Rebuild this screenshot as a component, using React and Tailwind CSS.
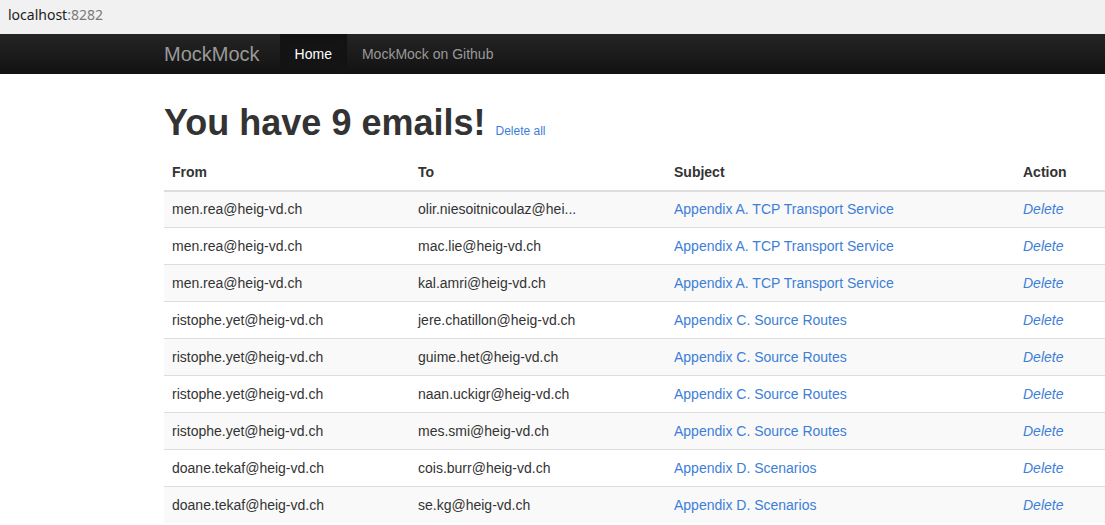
import React from 'react'

const emails = [
  { from: 'men.rea@heig-vd.ch', to: 'olir.niesoitnicoulaz@hei...', subject: 'Appendix A. TCP Transport Service' },
  { from: 'men.rea@heig-vd.ch', to: 'mac.lie@heig-vd.ch', subject: 'Appendix A. TCP Transport Service' },
  { from: 'men.rea@heig-vd.ch', to: 'kal.amri@heig-vd.ch', subject: 'Appendix A. TCP Transport Service' },
  { from: 'ristophe.yet@heig-vd.ch', to: 'jere.chatillon@heig-vd.ch', subject: 'Appendix C. Source Routes' },
  { from: 'ristophe.yet@heig-vd.ch', to: 'guime.het@heig-vd.ch', subject: 'Appendix C. Source Routes' },
  { from: 'ristophe.yet@heig-vd.ch', to: 'naan.uckigr@heig-vd.ch', subject: 'Appendix C. Source Routes' },
  { from: 'ristophe.yet@heig-vd.ch', to: 'mes.smi@heig-vd.ch', subject: 'Appendix C. Source Routes' },
  { from: 'doane.tekaf@heig-vd.ch', to: 'cois.burr@heig-vd.ch', subject: 'Appendix D. Scenarios' },
  { from: 'doane.tekaf@heig-vd.ch', to: 'se.kg@heig-vd.ch', subject: 'Appendix D. Scenarios' },
]

export default function App() {
  return (
    <div className="w-[1105px] h-[525px] overflow-hidden bg-white text-[#333] text-[14px] leading-[20px] font-['Liberation_Sans',Arial,sans-serif]">
      {/* browser address bar */}
      <div className="h-[34px] bg-[#f1f1f1] px-[8px] pt-[5px] font-['Noto_Sans',sans-serif] text-[14px]">
        <span className="text-[#1c1c1c]">localhost</span>
        <span className="text-[#7a7a7a]">:8282</span>
      </div>

      <nav className="h-[40px] bg-gradient-to-b from-[#252525] to-[#121212] flex pl-[164px]">
        <a className="text-[20px] leading-[20px] py-[10px] pr-[20px] text-[#999]">MockMock</a>
        <a className="px-[15px] py-[10px] bg-[#141414] text-white shadow-[inset_0_3px_8px_rgba(0,0,0,0.125)]">Home</a>
        <a className="px-[15px] py-[10px] text-[#999]">MockMock on Github</a>
      </nav>

      <div className="pl-[164px]">
        <div className="flex items-baseline mt-[29px] mb-[11px]">
          <h1 className="text-[36px] leading-[39.6px] font-bold">You have 9 emails!</h1>
          <a className="ml-[10px] text-[12px] text-[#3d7ed8]">Delete all</a>
        </div>

        <table className="w-[1140px] table-fixed border-collapse">
          <colgroup>
            <col className="w-[246px]" />
            <col className="w-[256px]" />
            <col className="w-[349px]" />
            <col />
          </colgroup>
          <thead>
            <tr>
              <th className="text-left p-[8px] font-bold border-b-2 border-[#ddd]">From</th>
              <th className="text-left p-[8px] font-bold border-b-2 border-[#ddd]">To</th>
              <th className="text-left p-[8px] font-bold border-b-2 border-[#ddd]">Subject</th>
              <th className="text-left p-[8px] font-bold border-b-2 border-[#ddd]">Action</th>
            </tr>
          </thead>
          <tbody>
            {emails.map((m, i) => (
              <tr key={i} className={i % 2 === 0 ? 'bg-[#f9f9f9]' : ''}>
                <td className={`px-[8px] border-[#ddd] ${i === 0 ? 'pt-[7px] pb-[8px]' : 'py-[8px] border-t'}`}>{m.from}</td>
                <td className={`px-[8px] border-[#ddd] ${i === 0 ? 'pt-[7px] pb-[8px]' : 'py-[8px] border-t'}`}>{m.to}</td>
                <td className={`px-[8px] border-[#ddd] ${i === 0 ? 'pt-[7px] pb-[8px]' : 'py-[8px] border-t'}`}>
                  <a className="text-[#3d7ed8]">{m.subject}</a>
                </td>
                <td className={`px-[8px] border-[#ddd] ${i === 0 ? 'pt-[7px] pb-[8px]' : 'py-[8px] border-t'}`}>
                  <a className="text-[#3d7ed8] italic">Delete</a>
                </td>
              </tr>
            ))}
          </tbody>
        </table>
      </div>
    </div>
  )
}
